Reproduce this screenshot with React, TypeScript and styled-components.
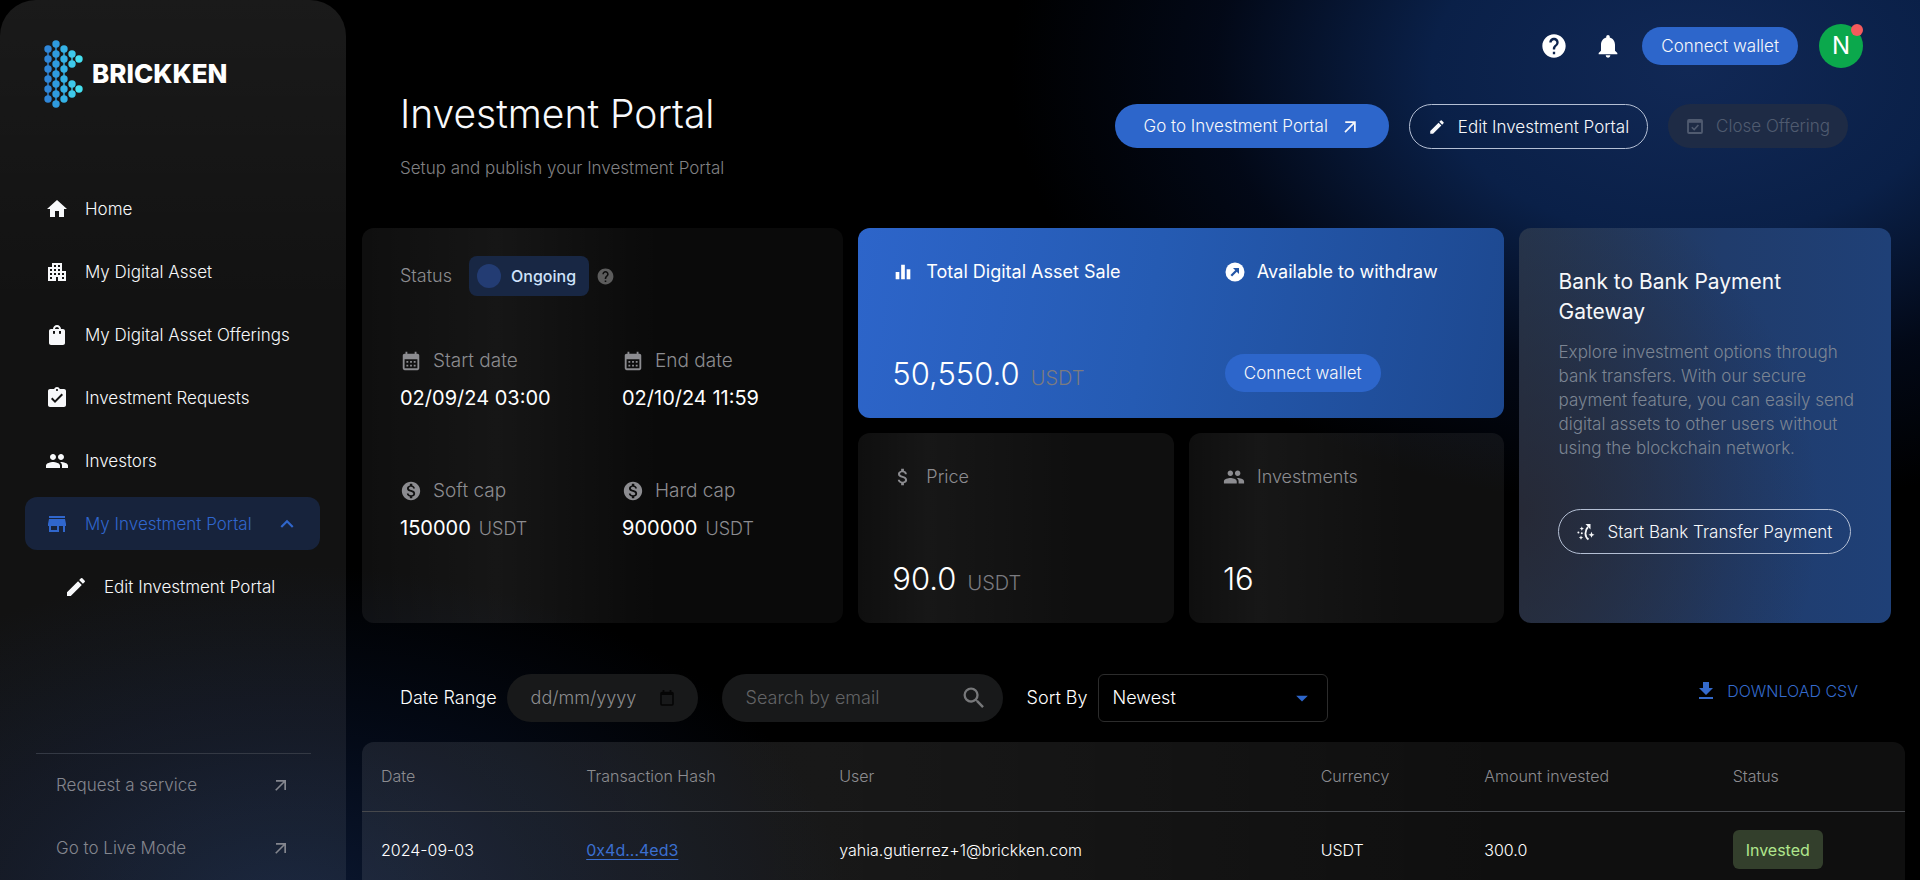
import React from 'react';
import styled, { createGlobalStyle, css } from 'styled-components';
import {
  MdApartment,
  MdArrowDropDown,
  MdArrowOutward,
  MdAssignmentTurnedIn,
  MdAttachMoney,
  MdCalendarMonth,
  MdDownload,
  MdEdit,
  MdEqualizer,
  MdExpandLess,
  MdHelp,
  MdHome,
  MdMonetizationOn,
  MdNotifications,
  MdPeople,
  MdSearch,
  MdShoppingBag,
  MdStore,
} from 'react-icons/md';

const color = {
  blue: '#2d66cb',
  white: '#f7f8fa',
  muted: '#8c8c90',
};

const GlobalStyle = createGlobalStyle`
  *, *::before, *::after { box-sizing: border-box; }
  body {
    margin: 0;
    background: #000;
    color: ${color.white};
    font-family: Inter, "Open Sans", sans-serif;
    font-size: 17px;
    font-weight: 300;
    line-height: 24px;
  }
  button, input, select { font: inherit; color: inherit; }
  h1, h2, p, dl, dd { margin: 0; font-weight: inherit; }
  a { color: inherit; text-decoration: none; }
  svg { display: block; flex: none; }
`;

const Shell = styled.div`
  display: flex;
  height: 100vh;
  background:
    radial-gradient(ellipse 680px 440px at 88% 8%, #112855 0%, #0a2048 38%, rgba(4, 14, 38, 0.6) 70%, rgba(0, 0, 0, 0) 100%),
    radial-gradient(ellipse 560px 350px at 15% 104%, #0b1832 0%, rgba(5, 13, 30, 0.8) 50%, rgba(0, 0, 0, 0) 100%),
    #000;
`;

const Sidebar = styled.aside`
  display: flex;
  flex-direction: column;
  flex: none;
  width: 346px;
  padding: 40px 26px 6px 25px;
  border-radius: 36px 36px 0 0;
  background: linear-gradient(180deg, rgba(255, 255, 255, 0.1) 0%, rgba(255, 255, 255, 0.07) 35%, rgba(255, 255, 255, 0.07) 100%);
`;

const Brand = styled.a`
  display: flex;
  align-items: center;
  gap: 9px;
  margin-bottom: 74px;
  padding-left: 19px;
  color: #fff;
  font-size: 26px;
  font-weight: 800;
`;

const NavList = styled.nav`
  display: flex;
  flex-direction: column;
  gap: 10px;
`;

const NavItem = styled.a<{ $active?: boolean; $nested?: boolean }>`
  display: flex;
  align-items: center;
  gap: 16px;
  height: 53px;
  padding: 0 20px;
  padding-left: ${(p) => (p.$nested ? 39 : 20)}px;
  border-radius: 12px;
  color: ${(p) => (p.$active ? '#3066cc' : color.white)};
  background: ${(p) => (p.$active ? '#17233c' : 'transparent')};

  span { flex: 1; }
`;

const SideFooter = styled.nav`
  display: flex;
  flex-direction: column;
  gap: 10px;
  margin: auto 9px 0 11px;
  padding-top: 4px;
  border-top: 1px solid #343944;
`;

const FooterLink = styled.a`
  display: flex;
  align-items: center;
  justify-content: space-between;
  height: 53px;
  padding: 0 20px;
  color: #84868e;
`;

const Main = styled.main`
  flex: 1;
  min-width: 0;
  padding: 24px 15px 0 16px;
  overflow-y: auto;
  scrollbar-width: none;
`;

const TopBar = styled.div`
  display: flex;
  justify-content: flex-end;
  align-items: center;
  padding-right: 42px;
`;

const TopIcons = styled.div`
  display: flex;
  margin-right: 7px;
`;

const IconButton = styled.button`
  display: grid;
  place-items: center;
  width: 54px;
  height: 44px;
  padding: 0;
  border: 0;
  background: none;
  color: #fff;
`;

const Avatar = styled.button`
  position: relative;
  width: 44px;
  height: 44px;
  margin-left: 21px;
  padding: 0;
  border: 0;
  border-radius: 50%;
  background: #0ba84c;
  color: #fff;
  font-size: 24px;
  font-weight: 400;

  &::after {
    content: '';
    position: absolute;
    top: 0;
    right: 0;
    width: 12px;
    height: 12px;
    border-radius: 50%;
    background: #f55a5c;
  }
`;

const Button = styled.button<{ $kind?: 'solid' | 'outline' | 'disabled'; $size?: 'small' }>`
  display: inline-flex;
  align-items: center;
  justify-content: center;
  gap: 12px;
  height: ${(p) => (p.$size === 'small' ? 38 : 44)}px;
  padding: 0 ${(p) => (p.$size === 'small' ? 19 : 28)}px;
  border: 0;
  border-radius: 24px;
  background: ${color.blue};
  white-space: nowrap;

  ${(p) =>
    p.$kind === 'outline' &&
    css`
      height: 45px;
      padding: 0 18px;
      border: 1px solid #b4bfd4;
      background: transparent;
    `}
  ${(p) =>
    p.$kind === 'disabled' &&
    css`
      padding: 0 18px;
      background: #1e2b45;
      color: #505b70;
    `}
`;

const PageHeader = styled.header`
  display: flex;
  justify-content: space-between;
  align-items: flex-start;
  margin-top: 22px;
  padding: 0 57px 0 38px;
`;

const Title = styled.h1`
  font-size: 39px;
  line-height: 48px;
`;

const Subtitle = styled.p`
  margin-top: 18px;
  color: #808083;
`;

const Actions = styled.div`
  display: flex;
  gap: 20px;
  padding-top: 14px;
`;

const Cards = styled.section`
  display: grid;
  grid-template-columns: 482fr 647fr 372fr;
  gap: 15px;
  margin: 48px 14px 0 0;
`;

const Card = styled.article`
  display: flex;
  flex-direction: column;
  justify-content: space-between;
  padding: 30px 34px 26px;
  border-radius: 12px;
  background: linear-gradient(90deg, rgba(255, 255, 255, 0.06) 0%, rgba(255, 255, 255, 0.09) 22%, rgba(255, 255, 255, 0.06) 70%, rgba(255, 255, 255, 0.06) 100%);
`;

const StatusCard = styled(Card)`
  justify-content: flex-start;
  padding: 28px 38px;
  background: linear-gradient(90deg, rgba(255, 255, 255, 0.06) 0%, rgba(255, 255, 255, 0.085) 28%, rgba(255, 255, 255, 0.04) 62%, rgba(255, 255, 255, 0.04) 100%);
`;

const StatusRow = styled.div`
  display: flex;
  align-items: center;
  gap: 7px;
  color: ${color.muted};
  font-size: 18px;
`;

const StatusBadge = styled.span`
  display: flex;
  align-items: center;
  gap: 10px;
  height: 40px;
  margin-left: 10px;
  padding: 0 13px 0 8px;
  border-radius: 8px;
  background: #182744;
  color: #cfe3fb;
  font-size: 16px;
  font-weight: 500;

  &::before {
    content: '';
    width: 24px;
    height: 24px;
    border-radius: 50%;
    background: #233c73;
  }
`;

const Facts = styled.dl`
  display: grid;
  grid-template-columns: 222px 1fr;
  row-gap: 66px;
  margin-top: 51px;
`;

const FactTerm = styled.dt`
  display: flex;
  align-items: center;
  gap: 11px;
  height: 28px;
  color: ${color.muted};
  font-size: 19px;
`;

const FactValue = styled.dd`
  display: flex;
  align-items: baseline;
  gap: 8px;
  margin-top: 10px;
  color: #fff;
  font-size: 20px;
  font-weight: 400;
  line-height: 26px;

  small {
    color: ${color.muted};
    font-size: 18px;
    font-weight: 300;
  }
`;

const CardLabel = styled.div<{ $bright?: boolean }>`
  display: flex;
  align-items: center;
  gap: 12px;
  height: 28px;
  color: ${(p) => (p.$bright ? '#fff' : color.muted)};
  font-size: 18px;
  font-weight: ${(p) => (p.$bright ? 400 : 300)};
`;

const Middle = styled.div`
  display: grid;
  grid-template-columns: 1fr 1fr;
  grid-template-rows: 190px 190px;
  gap: 15px;
`;

const SaleCard = styled(Card)`
  display: grid;
  grid-template-columns: 333fr 246fr;
  grid-column: 1 / -1;
  background: linear-gradient(100deg, #2d65ca 0%, #255bb3 45%, #1d488f 100%);
`;

const SaleColumn = styled.div`
  display: flex;
  flex-direction: column;
  justify-content: space-between;
  align-items: flex-start;
`;

const Amount = styled.div`
  display: flex;
  align-items: baseline;
  gap: 11px;
  color: #fff;
  font-size: 31px;
  line-height: 36px;

  small {
    color: #7b7b80;
    font-size: 20px;
    line-height: 20px;
  }
`;

const BankCard = styled(Card)`
  justify-content: flex-start;
  align-items: flex-start;
  padding: 39px 36px 0 39px;
  background:
    radial-gradient(ellipse 300px 340px at 0% 72%, rgba(38, 38, 48, 0.8), rgba(38, 38, 48, 0)),
    linear-gradient(90deg, #26364f 0%, #203c6c 55%, #1f4077 100%);

  h2 {
    font-size: 21px;
    font-weight: 400;
    line-height: 30px;
  }
  p {
    margin-top: 13px;
    color: #7c8593;
  }
  button { margin-top: 49px; }
`;

const Filters = styled.form`
  display: flex;
  align-items: center;
  margin-top: 51px;
  padding: 0 47px 0 38px;
  color: #fff;
  font-size: 18px;
`;

const FilterLabel = styled.label`
  margin-right: 10px;
`;

const Field = styled.div<{ $width: number; $hint: string }>`
  display: flex;
  align-items: center;
  width: ${(p) => p.$width}px;
  height: 48px;
  margin-right: 24px;
  padding: 0 15px 0 24px;
  border-radius: 24px;
  background: #18191a;

  input {
    flex: 1;
    min-width: 0;
    padding: 0;
    border: 0;
    outline: 0;
    background: transparent;
  }
  input::placeholder { color: ${(p) => p.$hint}; opacity: 1; }
`;

const DateField = styled(Field)`
  padding-right: 22px;
`;

const SelectBox = styled.div`
  position: relative;
  width: 230px;
  color: ${color.blue};

  select {
    width: 100%;
    height: 48px;
    padding: 0 14px;
    appearance: none;
    border: 1px solid #2c2c2c;
    border-radius: 6px;
    background: transparent;
    color: #fff;
  }
  svg {
    position: absolute;
    top: 10px;
    right: 12px;
    pointer-events: none;
  }
`;

const Download = styled.button`
  display: flex;
  align-items: center;
  align-self: flex-start;
  gap: 9px;
  height: 34px;
  margin-left: auto;
  padding: 0;
  border: 0;
  background: none;
  color: #346acc;
  font-size: 16px;
`;

const TablePanel = styled.section`
  margin-top: 20px;
  border-radius: 12px 12px 0 0;
  background: linear-gradient(90deg, rgba(255, 255, 255, 0.085) 0%, rgba(255, 255, 255, 0.095) 30%, rgba(255, 255, 255, 0.06) 75%, rgba(255, 255, 255, 0.06) 100%);
`;

const Table = styled.table`
  width: 100%;
  table-layout: fixed;
  border-collapse: collapse;
  font-size: 16px;
  text-align: left;

  th, td { padding: 0 0 0 19px; }
  th {
    height: 69px;
    border-bottom: 1px solid #46484c;
    color: ${color.muted};
    font-weight: 300;
  }
  td {
    height: 77px;
    color: #fff;
  }
`;

const HashLink = styled.a`
  color: #3b6fd0;
  font-weight: 400;
  text-decoration: underline;
  text-underline-offset: 3px;
`;

const Invested = styled.span`
  display: inline-flex;
  align-items: center;
  height: 39px;
  padding: 0 13px;
  border-radius: 6px;
  background: #333f2c;
  color: #b0e68d;
  font-weight: 400;
`;

const logoColumns = [
  { x: 4, fill: '#2f86d8', ys: [9, 19, 29, 39, 49, 59] },
  { x: 12, fill: '#2f9bdf', ys: [4, 14, 24, 34, 44, 54, 64] },
  { x: 20, fill: '#35b2e6', ys: [9, 19, 29, 39, 49, 59] },
  { x: 28, fill: '#3dc9ea', ys: [14, 24] },
  { x: 28, fill: '#3dc9ea', ys: [44, 54] },
  { x: 35, fill: '#46e0f0', ys: [19] },
  { x: 35, fill: '#46e0f0', ys: [49] },
];

const LogoMark = () => (
  <svg width="39" height="68" viewBox="0 0 39 68" aria-hidden="true">
    {logoColumns.map((c, i) => (
      <g key={i} fill={c.fill} stroke={c.fill}>
        <path d={`M${c.x} ${c.ys[0]}V${c.ys[c.ys.length - 1]}`} strokeWidth="1.4" />
        {c.ys.map((y) => (
          <circle key={y} cx={c.x} cy={y} r="3.7" stroke="none" />
        ))}
      </g>
    ))}
  </svg>
);

const CalendarCheckIcon = () => (
  <svg width="18" height="18" viewBox="0 0 18 18" fill="none" stroke="currentColor" aria-hidden="true">
    <rect x="2" y="3" width="14" height="13" rx="1" strokeWidth="1.8" />
    <path d="M2 4.5h14" strokeWidth="2.6" />
    <path d="M5.8 10.2l2.4 2.4 4.2-4.6" strokeWidth="1.6" />
  </svg>
);

const WithdrawIcon = () => (
  <svg width="20" height="20" viewBox="0 0 20 20" fill="none" aria-hidden="true">
    <circle cx="10" cy="10" r="9.5" fill="#fff" />
    <path d="M6.3 13.7l6-6" stroke="#2355a6" strokeWidth="2.2" />
    <path d="M8 6h6v6z" fill="#2355a6" />
  </svg>
);

const TransferIcon = () => (
  <svg width="18" height="18" viewBox="0 0 18 18" fill="none" stroke="currentColor" aria-hidden="true">
    <path d="M11.5 16.5C7.5 13.5 7.500 7.500 11 4" strokeWidth="1.8" />
    <path d="M8.500 1h5v5.500z" fill="currentColor" stroke="none" />
    <path d="M14.500 8.800l.9 2.100 2.100.9-2.100.9-.9 2.100-.9-2.100-2.100-.9 2.100-.9z" fill="currentColor" stroke="none" />
    <g fill="currentColor" stroke="none">
      <path d="M4.800 3.400l.7 1.500 1.500.7-1.500.7-.7 1.500-.7-1.500-1.500-.7 1.500-.7z" />
      <circle cx="1.400" cy="9.600" r="1" />
      <circle cx="4.800" cy="10.200" r="1" />
      <path d="M4 12.400l.7 1.500 1.500.7-1.500.7-.7 1.500-.7-1.500-1.500-.7 1.500-.7z" />
    </g>
  </svg>
);

const EmptyCalendarIcon = () => (
  <svg width="18" height="18" viewBox="0 0 18 18" fill="none" stroke="#050505" aria-hidden="true">
    <rect x="3" y="3.5" width="12" height="12.5" rx="1" strokeWidth="1.6" />
    <path d="M3 4.5h12" strokeWidth="3" />
    <path d="M5.5 1v3M12.5 1v3" strokeWidth="1.8" />
  </svg>
);

const navItems = [
  { label: 'Home', Icon: MdHome },
  { label: 'My Digital Asset', Icon: MdApartment },
  { label: 'My Digital Asset Offerings', Icon: MdShoppingBag },
  { label: 'Investment Requests', Icon: MdAssignmentTurnedIn },
  { label: 'Investors', Icon: MdPeople },
];

const facts = [
  { term: 'Start date', value: '02/09/24 03:00', Icon: MdCalendarMonth },
  { term: 'End date', value: '02/10/24 11:59', Icon: MdCalendarMonth },
  { term: 'Soft cap', value: '150000', unit: 'USDT', Icon: MdMonetizationOn },
  { term: 'Hard cap', value: '900000', unit: 'USDT', Icon: MdMonetizationOn },
];

const columns = [
  { name: 'Date', width: '13.3%' },
  { name: 'Transaction Hash', width: '16.4%' },
  { name: 'User', width: '31.2%' },
  { name: 'Currency', width: '10.6%' },
  { name: 'Amount invested', width: '16.1%' },
  { name: 'Status', width: '12.4%' },
];

export default function App() {
  return (
    <>
      <GlobalStyle />
      <Shell>
        <Sidebar>
          <Brand href="#">
            <LogoMark />
            BRICKKEN
          </Brand>
          <NavList>
            {navItems.map(({ label, Icon }) => (
              <NavItem href="#" key={label}>
                <Icon size={24} />
                <span>{label}</span>
              </NavItem>
            ))}
            <NavItem href="#" $active>
              <MdStore size={24} />
              <span>My Investment Portal</span>
              <MdExpandLess size={26} />
            </NavItem>
            <NavItem href="#" $nested>
              <MdEdit size={24} />
              <span>Edit Investment Portal</span>
            </NavItem>
          </NavList>
          <SideFooter>
            <FooterLink href="#">
              Request a service
              <MdArrowOutward size={20} />
            </FooterLink>
            <FooterLink href="#">
              Go to Live Mode
              <MdArrowOutward size={20} />
            </FooterLink>
          </SideFooter>
        </Sidebar>

        <Main>
          <TopBar>
            <TopIcons>
              <IconButton aria-label="Help">
                <MdHelp size={28} />
              </IconButton>
              <IconButton aria-label="Notifications">
                <MdNotifications size={28} />
              </IconButton>
            </TopIcons>
            <Button $size="small">Connect wallet</Button>
            <Avatar>N</Avatar>
          </TopBar>

          <PageHeader>
            <div>
              <Title>Investment Portal</Title>
              <Subtitle>Setup and publish your Investment Portal</Subtitle>
            </div>
            <Actions>
              <Button>
                Go to Investment Portal
                <MdArrowOutward size={21} />
              </Button>
              <Button $kind="outline">
                <MdEdit size={18} />
                Edit Investment Portal
              </Button>
              <Button $kind="disabled" disabled>
                <CalendarCheckIcon />
                Close Offering
              </Button>
            </Actions>
          </PageHeader>

          <Cards>
            <StatusCard>
              <StatusRow>
                Status
                <StatusBadge>Ongoing</StatusBadge>
                <MdHelp size={19} color="#5c5c5c" />
              </StatusRow>
              <Facts>
                {facts.map(({ term, value, unit, Icon }) => (
                  <div key={term}>
                    <FactTerm>
                      <Icon size={22} />
                      {term}
                    </FactTerm>
                    <FactValue>
                      {value} {unit && <small>{unit}</small>}
                    </FactValue>
                  </div>
                ))}
              </Facts>
            </StatusCard>

            <Middle>
              <SaleCard>
                <SaleColumn>
                  <CardLabel $bright>
                    <MdEqualizer size={22} />
                    Total Digital Asset Sale
                  </CardLabel>
                  <Amount>
                    50,550.0 <small>USDT</small>
                  </Amount>
                </SaleColumn>
                <SaleColumn>
                  <CardLabel $bright>
                    <WithdrawIcon />
                    Available to withdraw
                  </CardLabel>
                  <Button $size="small">Connect wallet</Button>
                </SaleColumn>
              </SaleCard>
              <Card>
                <CardLabel>
                  <MdAttachMoney size={22} />
                  Price
                </CardLabel>
                <Amount>
                  90.0 <small>USDT</small>
                </Amount>
              </Card>
              <Card>
                <CardLabel>
                  <MdPeople size={22} />
                  Investments
                </CardLabel>
                <Amount>16</Amount>
              </Card>
            </Middle>

            <BankCard>
              <h2>Bank to Bank Payment Gateway</h2>
              <p>
                Explore investment options through bank transfers. With our secure payment feature, you can easily send
                digital assets to other users without using the blockchain network.
              </p>
              <Button $kind="outline">
                <TransferIcon />
                Start Bank Transfer Payment
              </Button>
            </BankCard>
          </Cards>

          <Filters>
            <FilterLabel htmlFor="date-range">Date Range</FilterLabel>
            <DateField $width={191} $hint="#8c8d8f">
              <input id="date-range" placeholder="dd/mm/yyyy" />
              <EmptyCalendarIcon />
            </DateField>
            <Field $width={281} $hint="#636466">
              <input type="search" aria-label="Search by email" placeholder="Search by email" />
              <MdSearch size={28} color="#77787a" />
            </Field>
            <FilterLabel htmlFor="sort-by">Sort By</FilterLabel>
            <SelectBox>
              <select id="sort-by" defaultValue="Newest">
                <option>Newest</option>
                <option>Oldest</option>
              </select>
              <MdArrowDropDown size={28} />
            </SelectBox>
            <Download type="button">
              <MdDownload size={24} />
              DOWNLOAD CSV
            </Download>
          </Filters>

          <TablePanel>
            <Table>
              <colgroup>
                {columns.map((c) => (
                  <col key={c.name} width={c.width} />
                ))}
              </colgroup>
              <thead>
                <tr>
                  {columns.map((c) => (
                    <th key={c.name} scope="col">
                      {c.name}
                    </th>
                  ))}
                </tr>
              </thead>
              <tbody>
                <tr>
                  <td>2024-09-03</td>
                  <td>
                    <HashLink href="#">0x4d...4ed3</HashLink>
                  </td>
                  <td>yahia.gutierrez+1@brickken.com</td>
                  <td>USDT</td>
                  <td>300.0</td>
                  <td>
                    <Invested>Invested</Invested>
                  </td>
                </tr>
              </tbody>
            </Table>
          </TablePanel>
        </Main>
      </Shell>
    </>
  );
}
